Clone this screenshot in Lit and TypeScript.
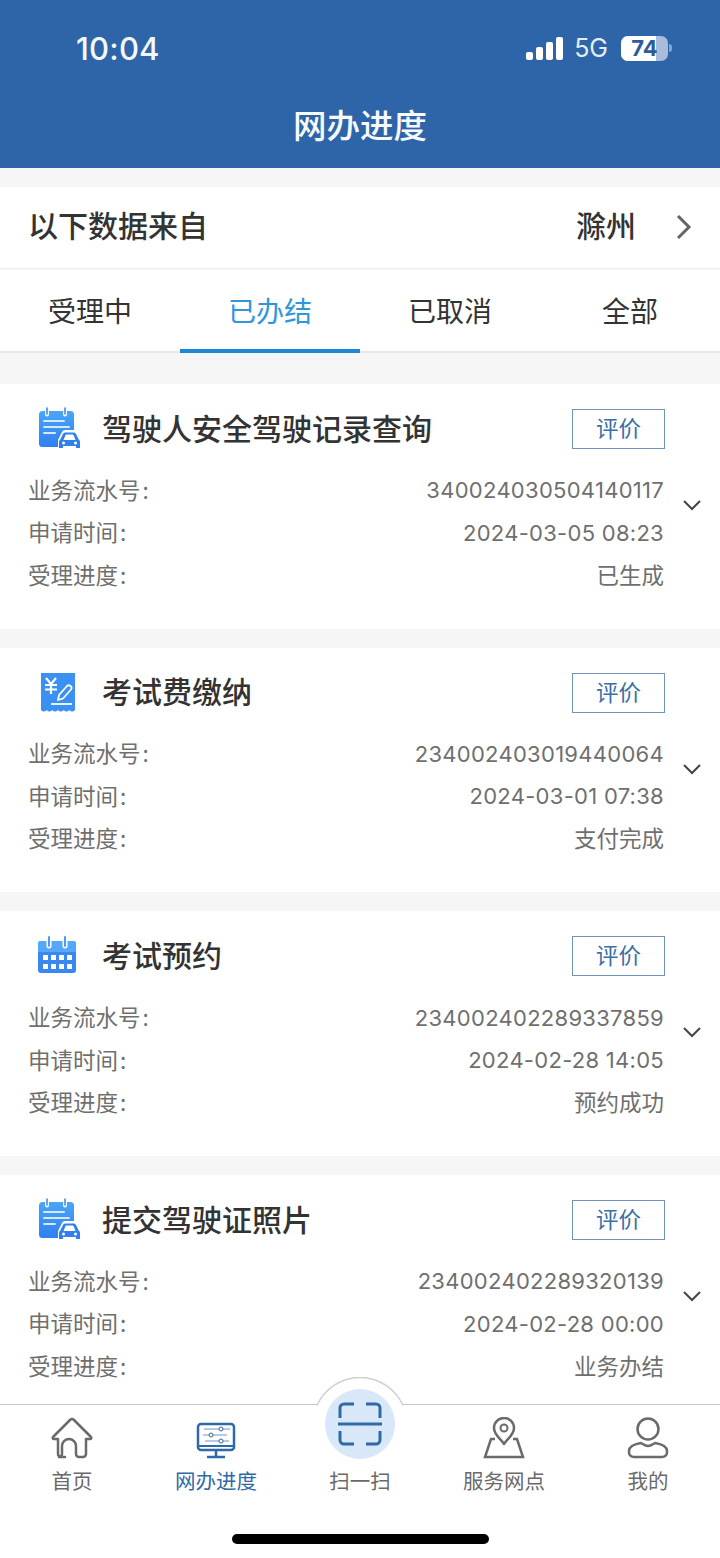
import { LitElement, html, css, svg } from "lit";
import { customElement } from "lit/decorators.js";

const noteIcon = html`<svg class="ic" viewBox="0 0 44 44"><defs><linearGradient id="g1" x1="0" y1="0" x2="0" y2="1"><stop offset="0" stop-color="#4aa6f8"/><stop offset="1" stop-color="#2f80ed"/></linearGradient></defs>
<rect x="1" y="4" width="35" height="36" rx="3.500" fill="url(#g1)"/>
<path d="M9 0.500v7M27 0.500v7" stroke="#fff" stroke-width="4" stroke-linecap="round"/><path d="M9 1v6M27 1v6" stroke="#3a8ff0" stroke-width="1.600" stroke-linecap="round"/>
<path d="M6 14h20M6 20h25M6 26h11" stroke="#d5e8fd" stroke-width="2" stroke-linecap="round"/>
<path d="M20 43v-10l4-8q1-2 3-2h9q2 0 3 2l4 8v10z" fill="#fff"/>
<path d="M25 27q.5-1.500 2-1.500h9q1.500 0 2 1.500l3 6a2 2 0 0 1 1 2v6h-4v-2H25v2h-4v-6a2 2 0 0 1 1-2z" fill="#2f80ed"/>
<path d="M25.500 33l2-5q.2-.6 1-.6h6q.8 0 1 .6l2 5z" fill="#fff"/><circle cx="25.500" cy="36" r="1.500" fill="#fff"/><circle cx="37.500" cy="36" r="1.500" fill="#fff"/></svg>`;

const feeIcon = html`<svg class="ic" viewBox="0 0 44 44"><path d="M3 2h34v37q-2.800 3-5.700 0-2.800 3-5.700 0-2.800 3-5.700 0-2.800 3-5.700 0-2.800 3-5.500 0-2.800 3-5.700 0z" fill="#3a90f3"/>
<path d="M8 7l5 6 5-6M13 13v10M7 14h12M7 18.500h12" fill="none" stroke="#fff" stroke-width="2.200"/>
<path d="M20 29l1-5 8-9q1.500-1.500 3.500 0t.5 3.500l-8 9z" fill="none" stroke="#fff" stroke-width="1.800" stroke-linejoin="round"/>
<path d="M13 33h21" stroke="#fff" stroke-width="1.800"/></svg>`;

const calIcon = html`<svg class="ic" viewBox="0 0 44 44"><path d="M3 7h32a3 3 0 0 1 3 3v26a3 3 0 0 1-3 3H3a3 3 0 0 1-3-3V10a3 3 0 0 1 3-3z" fill="#3a88ef"/>
<path d="M0 10a3 3 0 0 1 3-3h32a3 3 0 0 1 3 3v8H0z" fill="#55a8f7"/>
<path d="M11 3v9M27 3v9" stroke="#fff" stroke-width="5" stroke-linecap="round"/><path d="M11 3v9M27 3v9" stroke="#4a9bf5" stroke-width="2" stroke-linecap="round"/>
${[21, 30].map(y => [5, 13, 21, 29].map(x => svg`<rect x=${x} y=${y} width="5" height="5" fill="#fff"/>`))}</svg>`;

const items = [
  { icon: noteIcon, t: "驾驶人安全驾驶记录查询", no: "340024030504140117", time: "2024-03-05 08:23", st: "已生成" },
  { icon: feeIcon, t: "考试费缴纳", no: "234002403019440064", time: "2024-03-01 07:38", st: "支付完成" },
  { icon: calIcon, t: "考试预约", no: "234002402289337859", time: "2024-02-28 14:05", st: "预约成功" },
  { icon: noteIcon, t: "提交驾驶证照片", no: "234002402289320139", time: "2024-02-28 00:00", st: "业务办结" },
];

@customElement("app-root")
export class AppRoot extends LitElement {
  static styles = css`
    :host { display: flex; flex-direction: column; position: relative; width: 720px; height: 1558px; overflow: hidden; background: #f6f6f6;
      font-family: "Noto Sans CJK SC", "Inter", sans-serif; }
    .hdr { height: 168px; flex: none; background: #2e65a9; color: #fff; display: flex; flex-direction: column; }
    .status { height: 96px; display: flex; align-items: center; padding: 0 48px 0 76px; justify-content: space-between; box-sizing: border-box; }
    .time { font: 500 31px "Inter", sans-serif; letter-spacing: .2px; color: #f4f8fc; }
    .sr { display: flex; align-items: center; }
    .sig { width: 37px; height: 23px; margin-right: 11px; display: block; }
    .g5 { font: 400 25px "Inter", sans-serif; color: #e4edf7; margin-right: 13px; }
    .bat { width: 47px; height: 25px; border-radius: 7px; overflow: hidden; position: relative; background: #a9bcd9; }
    .batfill { width: 35px; height: 25px; background: #fff; }
    .batn { position: absolute; inset: 0; text-align: center; font: 700 22px/25px "Inter", sans-serif; color: #2e5c9b; }
    .cap { width: 3px; height: 8px; background: #7fa8d8; border-radius: 0 3px 3px 0; margin-left: 1px; }
    .title { text-align: center; font-size: 33.500px; font-weight: 500; line-height: 60px; margin-top: -2px; color: #f7fafd; }
    .src { margin-top: 19px; height: 82px; flex: none; background: #fff; display: flex; align-items: center; padding: 0 26px 0 28px; font-size: 30px; font-weight: 500; color: #333; border-bottom: 1px solid #f0f0f0; box-sizing: border-box; }
    .src .l { flex: 1; padding-bottom: 7px; }
    .src .c { margin-right: 38px; padding-bottom: 7px; }
    .chev { width: 20px; height: 28px; display: block; margin-bottom: 1px; }
    .tabs { height: 83px; flex: none; background: #fff; display: flex; border-bottom: 2px solid #e8e8e8; box-sizing: border-box; margin-top: 1px; }
    .tab { flex: 1; text-align: center; line-height: 81px; font-size: 28px; color: #333; position: relative; }
    .tab.on { color: #2d96dc; }
    .tab.on::after { content: ""; position: absolute; left: 0; right: 0; bottom: -2px; height: 4px; background: #1d88d6; }
    .list { flex: 1; min-height: 0; overflow: hidden; padding-top: 31px; display: flex; flex-direction: column; gap: 19px; }
    .card { flex: none; height: 244.700px; background: #fff; position: relative; box-sizing: border-box; padding: 25px 55px 0 28px; }
    .head { display: flex; align-items: center; height: 40px; }
    .ic { width: 44px; height: 44px; flex: none; margin-left: 10px; display: block; }
    .name { flex: 1; margin-left: 20px; font-size: 30px; font-weight: 500; color: #333; padding-bottom: 5px; }
    .btn { width: 93px; height: 40px; box-sizing: border-box; border: 1.500px solid #6f94b8; text-align: center; font-size: 22.500px; line-height: 35px; color: #3a6fa5; }
    .rows { margin: 20px 1px 0 0; }
    .row { height: 42.500px; display: flex; justify-content: space-between; align-items: center; font-size: 22.500px; color: #6f6f6f; }
    .lab { padding-bottom: 3px; }
    .lab i { font-style: normal; margin-left: 2px; }
    .row .v { font-family: "Inter", "Noto Sans CJK SC", sans-serif; font-size: 22px; letter-spacing: .28px; }
    .row .zh { font-family: "Noto Sans CJK SC", sans-serif; font-size: 22.500px; letter-spacing: 0; padding-bottom: 3px; }
    .down { position: absolute; right: 18px; top: 114px; width: 20px; height: 14px; }
    .nav { height: 154px; flex: none; background: #fff; border-top: 1.500px solid #c8c8c8; position: relative; display: flex; box-sizing: border-box; }
    .it { width: 144px; display: flex; flex-direction: column; align-items: center; font-size: 20.500px; color: #6a6a6a; padding-top: 12px; }
    .it svg { width: 44px; height: 44px; display: block; }
    .it span { margin-top: 3px; line-height: 32px; }
    .it.on { color: #2f69a8; }
    .arc { position: absolute; left: 315px; top: -28px; width: 90px; height: 30px; display: block; }
    .disc { position: absolute; left: 325px; top: -16px; width: 70px; height: 70px; border-radius: 50%; background: #d8e8f9; display: flex; align-items: center; justify-content: center; }
    .disc svg { width: 46px; height: 46px; display: block; }
    .it.scanlabel { padding-top: 59px; }
    .scanlabel span { margin-top: 0; }
    .home { position: absolute; left: 232px; top: 129px; width: 257px; height: 10px; border-radius: 5px; background: #000; }
  `;
  render() {
    return html`
      <div class="hdr">
        <div class="status">
          <div class="time">10:04</div>
          <div class="sr">
            <svg class="sig" viewBox="0 0 37 23"><rect x="0" y="15" width="7" height="8" rx="2" fill="#fff"/><rect x="10" y="10" width="7" height="13" rx="2" fill="#fff"/><rect x="20" y="5" width="7" height="18" rx="2" fill="#fff"/><rect x="30" y="0" width="7" height="23" rx="2" fill="#fff"/></svg>
            <div class="g5">5G</div>
            <div class="bat"><div class="batfill"></div><div class="batn">74</div></div>
            <div class="cap"></div>
          </div>
        </div>
        <div class="title">网办进度</div>
      </div>
      <div class="src">
        <div class="l">以下数据来自</div><div class="c">滁州</div>
        <svg class="chev" viewBox="0 0 20 28"><path d="M4 3l11 11L4 25" fill="none" stroke="#666" stroke-width="3"/></svg>
      </div>
      <div class="tabs">
        <div class="tab">受理中</div><div class="tab on">已办结</div><div class="tab">已取消</div><div class="tab">全部</div>
      </div>
      <div class="list">
        ${items.map(i => html`<div class="card">
          <div class="head">${i.icon}<div class="name">${i.t}</div><div class="btn">评价</div></div>
          <div class="rows">
            <div class="row"><span class="lab">业务流水号<i>:</i></span><span class="v">${i.no}</span></div>
            <div class="row"><span class="lab">申请时间<i>:</i></span><span class="v">${i.time}</span></div>
            <div class="row"><span class="lab">受理进度<i>:</i></span><span class="v zh">${i.st}</span></div>
          </div>
          <svg class="down" viewBox="0 0 20 14"><path d="M2 3l8 8 8-8" fill="none" stroke="#444" stroke-width="2"/></svg>
        </div>`)}
      </div>
      <div class="nav">
        <svg class="arc" viewBox="0 0 90 30"><path d="M2 28.500A47 47 0 0 1 88 28.500V30H2z" fill="#fff"/><path d="M2 28.500A47 47 0 0 1 88 28.500" fill="none" stroke="#d0d0d0" stroke-width="1.500"/></svg>
        <div class="it">
          <svg viewBox="0 0 44 44"><path d="M15 40H11a3 3 0 0 1-3-3V22H4q-2 0-1-2L20 3q2-2 4 0l17 17q1 2-1 2h-4v15a3 3 0 0 1-3 3h-4a3 3 0 0 1-3-3V29a7 7 0 0 0-14 0v8a3 3 0 0 1-3 3z" fill="none" stroke="#6a6a6a" stroke-width="2.500" stroke-linejoin="round"/></svg>
          <span>首页</span>
        </div>
        <div class="it on">
          <svg viewBox="0 0 44 44"><rect x="4" y="7" width="36" height="26" rx="3" fill="none" stroke="#2f69a8" stroke-width="2.500"/><path d="M4 29h36" stroke="#2f69a8" stroke-width="2"/><path d="M22 33v6M13 40h18" stroke="#2f69a8" stroke-width="2.500"/><path d="M10 12h26M9 18h24M11 24h24" stroke="#6f97c4" stroke-width="1"/><circle cx="27" cy="12" r="2" fill="#fff" stroke="#2f69a8"/><circle cx="17" cy="18" r="2" fill="#fff" stroke="#2f69a8"/><circle cx="27" cy="24" r="2" fill="#fff" stroke="#2f69a8"/></svg>
          <span>网办进度</span>
        </div>
        <div class="it scanlabel"><span>扫一扫</span></div>
        <div class="it">
          <svg viewBox="0 0 44 44"><path d="M22 27c-3-5-10-9-10-16a10 10 0 0 1 20 0c0 7-7 11-10 16z" fill="none" stroke="#6a6a6a" stroke-width="2.500" stroke-linejoin="round"/><circle cx="22" cy="11" r="3.500" fill="none" stroke="#6a6a6a" stroke-width="2"/><path d="M13 22H9L3 40h38l-6-18h-4" fill="none" stroke="#6a6a6a" stroke-width="2.500"/></svg>
          <span>服务网点</span>
        </div>
        <div class="it">
          <svg viewBox="0 0 44 44"><circle cx="22" cy="12" r="10.500" fill="none" stroke="#6a6a6a" stroke-width="2.500"/><path d="M15 26c-6 1-12 3-12 8v1c0 3 2 5 5 5h28c3 0 5-2 5-5v-1c0-5-6-7-12-8-2 1-4 3-7 3s-5-2-7-3z" fill="none" stroke="#6a6a6a" stroke-width="2.500"/></svg>
          <span>我的</span>
        </div>
        <div class="disc"><svg viewBox="0 0 46 46"><path d="M17 3H7a4 4 0 0 0-4 4v10M29 3h10a4 4 0 0 1 4 4v10M17 43H7a4 4 0 0 1-4-4V30M29 43h10a4 4 0 0 0 4-4V30M1 23h44" fill="none" stroke="#2f69a8" stroke-width="3"/></svg></div>
        <div class="home"></div>
      </div>
    `;
  }
}
